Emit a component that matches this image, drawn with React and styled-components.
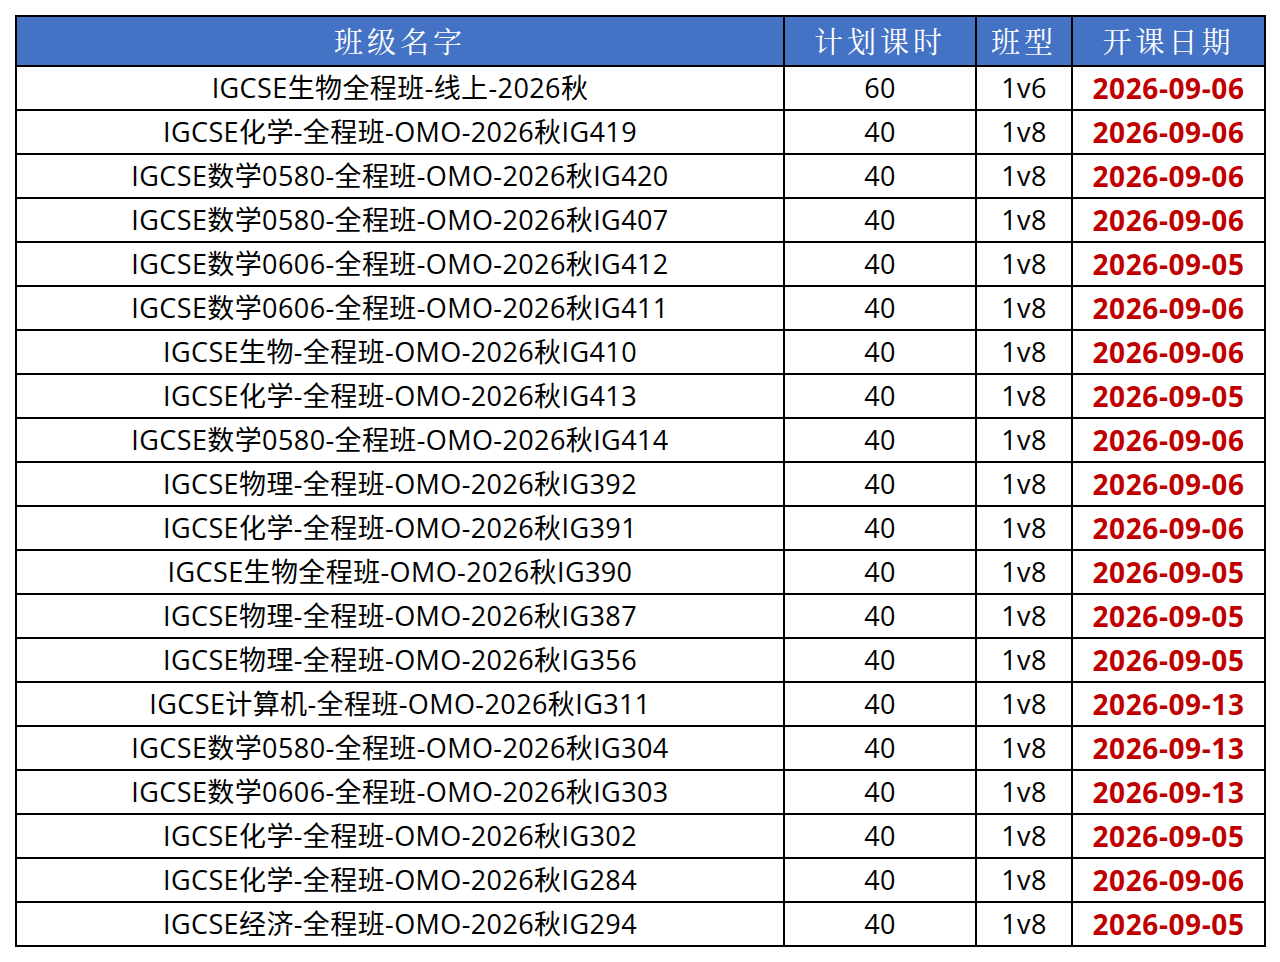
import React from 'react';
import styled, { createGlobalStyle } from 'styled-components';

const rows = [
  ['IGCSE生物全程班-线上-2026秋', '60', '1v6', '2026-09-06'],
  ['IGCSE化学-全程班-OMO-2026秋IG419', '40', '1v8', '2026-09-06'],
  ['IGCSE数学0580-全程班-OMO-2026秋IG420', '40', '1v8', '2026-09-06'],
  ['IGCSE数学0580-全程班-OMO-2026秋IG407', '40', '1v8', '2026-09-06'],
  ['IGCSE数学0606-全程班-OMO-2026秋IG412', '40', '1v8', '2026-09-05'],
  ['IGCSE数学0606-全程班-OMO-2026秋IG411', '40', '1v8', '2026-09-06'],
  ['IGCSE生物-全程班-OMO-2026秋IG410', '40', '1v8', '2026-09-06'],
  ['IGCSE化学-全程班-OMO-2026秋IG413', '40', '1v8', '2026-09-05'],
  ['IGCSE数学0580-全程班-OMO-2026秋IG414', '40', '1v8', '2026-09-06'],
  ['IGCSE物理-全程班-OMO-2026秋IG392', '40', '1v8', '2026-09-06'],
  ['IGCSE化学-全程班-OMO-2026秋IG391', '40', '1v8', '2026-09-06'],
  ['IGCSE生物全程班-OMO-2026秋IG390', '40', '1v8', '2026-09-05'],
  ['IGCSE物理-全程班-OMO-2026秋IG387', '40', '1v8', '2026-09-05'],
  ['IGCSE物理-全程班-OMO-2026秋IG356', '40', '1v8', '2026-09-05'],
  ['IGCSE计算机-全程班-OMO-2026秋IG311', '40', '1v8', '2026-09-13'],
  ['IGCSE数学0580-全程班-OMO-2026秋IG304', '40', '1v8', '2026-09-13'],
  ['IGCSE数学0606-全程班-OMO-2026秋IG303', '40', '1v8', '2026-09-13'],
  ['IGCSE化学-全程班-OMO-2026秋IG302', '40', '1v8', '2026-09-05'],
  ['IGCSE化学-全程班-OMO-2026秋IG284', '40', '1v8', '2026-09-06'],
  ['IGCSE经济-全程班-OMO-2026秋IG294', '40', '1v8', '2026-09-05'],
];

const GlobalStyle = createGlobalStyle`
  body {
    margin: 0;
    background: #fff;
  }
`;

const Page = styled.div`
  padding: 15px 16px 0 15px;
`;

const Table = styled.table`
  border-collapse: collapse;
  width: 1249px;
  table-layout: fixed;
  border: 2px solid #000;
`;

const HeadCell = styled.th`
  background: #4472c4;
  color: #fff;
  height: 48px;
  padding: 0;
  border: 2px solid #000;
  font-family: "Noto Serif CJK SC", "Noto Sans CJK SC", serif;
  font-weight: 400;
  font-size: 29px;
  line-height: 48px;
  letter-spacing: 4px;
  text-align: center;
  vertical-align: middle;
`;

const Cell = styled.td`
  height: 42px;
  padding: 0;
  border: 2px solid #000;
  text-align: center;
  vertical-align: middle;
  font-family: "Open Sans", "Noto Sans CJK SC", sans-serif;
  font-size: ${p => (p.$date ? '28px' : '27px')};
  line-height: 40px;
  letter-spacing: ${p => (p.$date ? '0.6px' : '0.4px')};
  color: ${p => (p.$date ? '#c00000' : '#000')};
  font-weight: ${p => (p.$date ? 700 : 400)};
  white-space: nowrap;
`;

export default function App() {
  return (
    <Page>
      <GlobalStyle />
      <Table>
        <colgroup>
          <col style={{ width: 768 }} />
          <col style={{ width: 192 }} />
          <col style={{ width: 96 }} />
          <col style={{ width: 193 }} />
        </colgroup>
        <thead>
          <tr>
            <HeadCell>班级名字</HeadCell>
            <HeadCell>计划课时</HeadCell>
            <HeadCell>班型</HeadCell>
            <HeadCell>开课日期</HeadCell>
          </tr>
        </thead>
        <tbody>
          {rows.map((r, i) => (
            <tr key={i}>
              <Cell>{r[0]}</Cell>
              <Cell>{r[1]}</Cell>
              <Cell>{r[2]}</Cell>
              <Cell $date>{r[3]}</Cell>
            </tr>
          ))}
        </tbody>
      </Table>
    </Page>
  );
}
